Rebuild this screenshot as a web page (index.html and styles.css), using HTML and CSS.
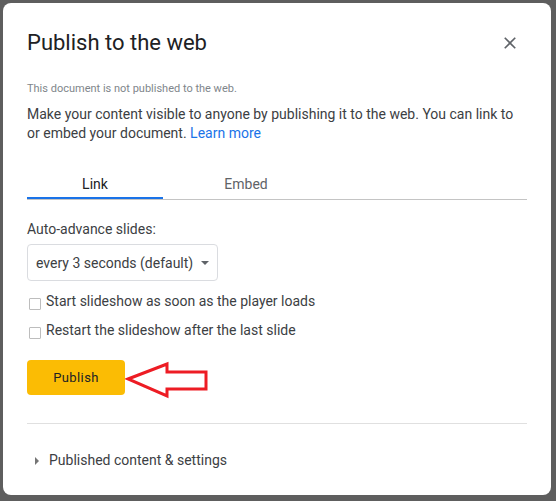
FILE: index.html
```html
<!DOCTYPE html>
<html lang="en">

<head>
    <meta charset="UTF-8">
    <meta name="viewport" content="width=device-width, initial-scale=1.0">
    <title>Publish to the web</title>
    <link rel="stylesheet" href="styles.css">
</head>

<body>
    <div class="dialog">
        <div class="dialog-header">
            <h1>Publish to the web</h1>
            <button class="close-btn" aria-label="Close">
                <svg width="20" height="20" viewBox="0 0 24 24">
                    <path fill="#5f6368" d="M19 6.41L17.59 5 12 10.59 6.41 5 5 6.41 10.59 12 5 17.59 6.41 19 12 13.41 17.59 19 19 17.59 13.41 12z"/>
                </svg>
            </button>
        </div>

        <p class="status">This document is not published to the web.</p>
        <p class="desc">Make your content visible to anyone by publishing it to the web. You can link to or embed your document. <a href="#">Learn more</a></p>

        <div class="tabs">
            <div class="tab active">Link</div>
            <div class="tab">Embed</div>
        </div>

        <p class="field-label">Auto-advance slides:</p>
        <div class="select">
            <span>every 3 seconds (default)</span>
            <span class="caret"></span>
        </div>

        <label class="check-row"><span class="checkbox"></span>Start slideshow as soon as the player loads</label>
        <label class="check-row"><span class="checkbox"></span>Restart the slideshow after the last slide</label>

        <div class="publish-row">
            <button class="publish-btn">Publish</button>
            <!-- annotation arrow -->
            <svg class="arrow" width="85" height="40" viewBox="0 0 85 40">
                <polygon points="3,19 42,4 42,12 81,12 81,29 42,29 42,36" fill="none" stroke="#ed1c24" stroke-width="3" stroke-linejoin="miter"/>
            </svg>
        </div>

        <hr class="divider">

        <div class="footer">
            <span class="tri"></span>
            Published content &amp; settings
        </div>
    </div>
</body>

</html>
```

FILE: styles.css
```css
* {
    margin: 0;
    padding: 0;
    box-sizing: border-box;
}

body {
    background-color: #5e5e5e;
    font-family: Roboto, Arial, sans-serif;
    color: #3c4043;
    padding: 3px;
}

.dialog {
    width: 548px;
    height: 492px;
    background-color: #fff;
    border-radius: 8px;
    padding: 0 24px;
}

.dialog-header {
    display: flex;
    justify-content: space-between;
    align-items: center;
    padding-top: 24px;
    height: 55px;
}

.dialog-header h1 {
    font-size: 22px;
    font-weight: 400;
    line-height: 28px;
    color: #202124;
}

.close-btn {
    background: none;
    border: none;
    width: 20px;
    height: 20px;
    margin-right: 7px;
    margin-top: 1px;
    cursor: pointer;
}

.status {
    margin-top: 23px;
    font-size: 11px;
    line-height: 16px;
    color: #80868b;
}

.desc {
    margin-top: 8px;
    font-size: 14px;
    line-height: 19px;
    color: #3c4043;
}

.desc a {
    color: #1a73e8;
    text-decoration: none;
}

.tabs {
    display: flex;
    margin-top: 20px;
    border-bottom: 1px solid #c4c4c4;
}

.tab {
    width: 136px;
    height: 36px;
    padding-top: 11px;
    font-size: 14px;
    line-height: 20px;
    text-align: center;
    color: #5f6368;
}

.tab + .tab {
    width: 166px;
}

.tab.active {
    color: #202124;
    box-shadow: inset 0 -2px 0 #1a73e8;
}

.field-label {
    margin-top: 19px;
    font-size: 14px;
    line-height: 20px;
    color: #3c4043;
}

.select {
    display: flex;
    align-items: center;
    width: 191px;
    height: 37px;
    margin-top: 5px;
    padding-left: 8px;
    border: 1px solid #dadce0;
    border-radius: 4px;
    font-size: 14px;
    color: #3c4043;
}

.caret {
    margin-left: 8px;
    margin-top: 1px;
    border-left: 4px solid transparent;
    border-right: 4px solid transparent;
    border-top: 4px solid #5f6368;
}

.check-row {
    display: flex;
    align-items: flex-start;
    margin-top: 10px;
    font-size: 14px;
    line-height: 20px;
    color: #3c4043;
}

.check-row + .check-row {
    margin-top: 9px;
}

.checkbox {
    width: 12px;
    height: 12px;
    margin: 7px 5px 0 2px;
    border: 1px solid #bdbdbd;
    border-radius: 1px;
}

.publish-row {
    position: relative;
    margin-top: 20px;
}

.publish-btn {
    width: 98px;
    height: 35px;
    background-color: #fbbc04;
    border: none;
    border-radius: 4px;
    font-family: Roboto, Arial, sans-serif;
    font-size: 13px;
    font-weight: 400;
    letter-spacing: 0.4px;
    color: #202124;
    cursor: pointer;
}

.arrow {
    position: absolute;
    left: 98px;
    top: 0;
}

.divider {
    margin-top: 28px;
    border: none;
    border-top: 1px solid #e0e0e0;
}

.footer {
    display: flex;
    align-items: center;
    margin-top: 26px;
    padding-left: 8px;
    font-size: 14px;
    line-height: 20px;
    color: #3c4043;
}

.tri {
    margin-right: 10px;
    margin-top: 1px;
    border-top: 4px solid transparent;
    border-bottom: 4px solid transparent;
    border-left: 4px solid #757575;
}
```
